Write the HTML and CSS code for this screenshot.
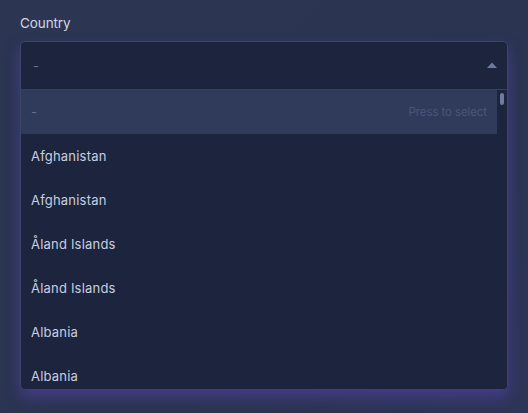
FILE: index.html
```html
<!DOCTYPE html>
<html>
<head>
<meta charset="utf-8">
<link rel="stylesheet" href="styles.css">
</head>
<body>
<div class="field">
  <div class="label">Country</div>
  <div class="select">
    <div class="control">
      <span class="value">-</span>
      <svg class="arrow" width="10" height="6" viewBox="0 0 10 6"><path d="M0 6 L5 0.5 L10 6 Z" fill="#6d7aa0"/></svg>
    </div>
    <div class="menu">
      <div class="list">
        <div class="option active"><span class="dash">-</span><span class="hint">Press to select</span></div>
        <div class="option">Afghanistan</div>
        <div class="option">Afghanistan</div>
        <div class="option">Åland Islands</div>
        <div class="option">Åland Islands</div>
        <div class="option">Albania</div>
        <div class="option">Albania</div>
      </div>
      <div class="scrollbar"><div class="thumb"></div></div>
    </div>
  </div>
</div>
</body>
</html>
```

FILE: styles.css
```css
html, body {
  margin: 0;
  padding: 0;
}
body {
  width: 528px;
  height: 413px;
  overflow: hidden;
  background: linear-gradient(135deg, #2c3551 0%, #2b3451 60%, #2e3558 100%);
  font-family: "Inter", "Noto Sans", sans-serif;
  color: #c9cee0;
}
.field {
  padding: 14px 20px 0 20px;
}
.label {
  font-size: 13.5px;
  line-height: 18px;
  color: #d2d6e3;
  margin-bottom: 9px;
  letter-spacing: -0.1px;
}
.select {
  width: 488px;
  box-sizing: border-box;
  border: 1px solid #3a4569;
  border-radius: 5px;
  background: #1c253d;
  box-shadow: 0 7px 14px rgba(88, 66, 180, 0.55);
  overflow: hidden;
}
.control {
  height: 47px;
  display: flex;
  align-items: center;
  justify-content: space-between;
  padding: 0 10px 0 12px;
  border-bottom: 1px solid #344065;
}
.value {
  color: #6a7494;
  font-size: 13px;
}
.arrow {
  display: block;
  margin-top: -1px;
}
.menu {
  display: flex;
  height: 299px;
  overflow: hidden;
}
.list {
  flex: 1;
}
.option {
  height: 44px;
  display: flex;
  align-items: center;
  justify-content: space-between;
  padding: 0 10px 0 10px;
  font-size: 13px;
  letter-spacing: 0.2px;
  color: #c9cee0;
}
.option.active {
  height: 44px;
  background: #303b5b;
}
.dash {
  color: #67718f;
}
.hint {
  color: #4b5677;
  font-size: 11.5px;
  letter-spacing: -0.1px;
}
.scrollbar {
  width: 10px;
  background: #1c253d;
  display: flex;
  justify-content: center;
  padding-top: 3px;
}
.thumb {
  width: 4px;
  height: 12px;
  border-radius: 2px;
  background: #6e7a9e;
}
```
